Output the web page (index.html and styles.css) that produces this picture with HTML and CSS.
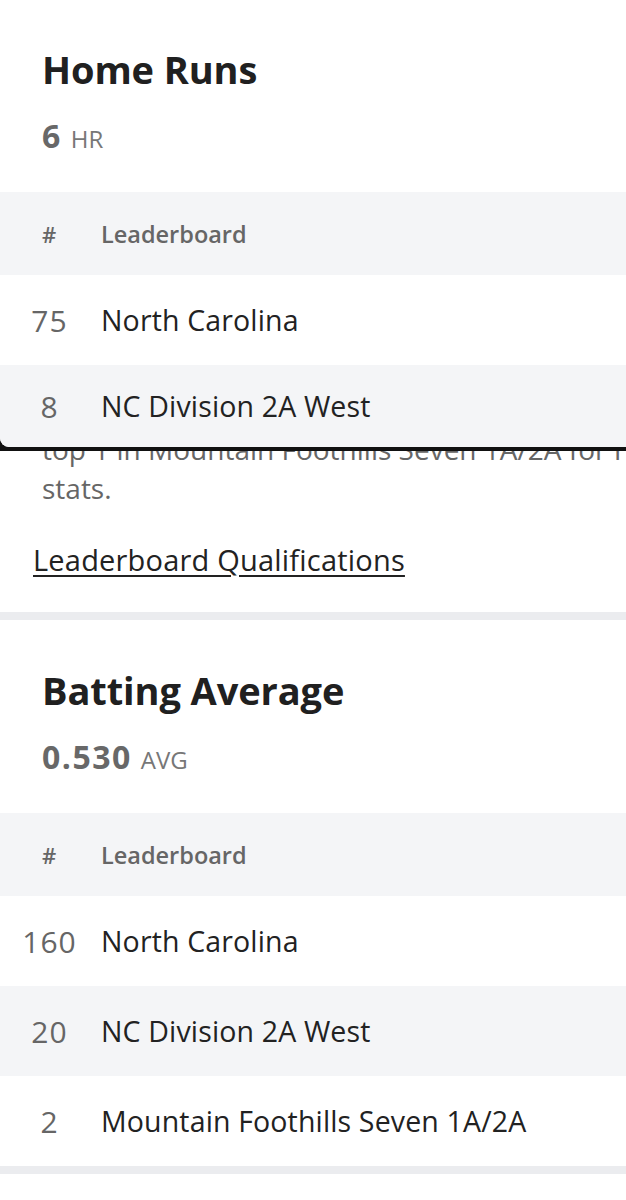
FILE: index.html
```html
<!DOCTYPE html>
<html lang="en">
<head>
<meta charset="utf-8">
<title>Stats</title>
<link rel="stylesheet" href="styles.css">
</head>
<body>
<div class="overlay-wrap">
  <section class="panel">
    <h2 class="stat-title">Home Runs</h2>
    <div class="stat-value"><span class="num">6</span><span class="unit">HR</span></div>
    <div class="board">
      <div class="row head"><span class="rank">#</span><span class="name">Leaderboard</span></div>
      <div class="row"><span class="rank">75</span><span class="name">North Carolina</span></div>
      <div class="row alt short"><span class="rank">8</span><span class="name">NC Division 2A West</span></div>
    </div>
  </section>
</div>
<div class="under">
  <p class="note"><span class="line">top 1 in Mountain Foothills Seven 1A/2A for Home Runs</span><br><span class="line">stats.</span></p>
  <a class="qual" href="#">Leaderboard Qualifications</a>
</div>
<div class="divider"></div>
<section class="card">
  <h2 class="stat-title">Batting Average</h2>
  <div class="stat-value"><span class="num">0.530</span><span class="unit">AVG</span></div>
  <div class="board">
    <div class="row head"><span class="rank">#</span><span class="name">Leaderboard</span></div>
    <div class="row"><span class="rank">160</span><span class="name">North Carolina</span></div>
    <div class="row alt"><span class="rank">20</span><span class="name">NC Division 2A West</span></div>
    <div class="row"><span class="rank">2</span><span class="name">Mountain Foothills Seven 1A/2A</span></div>
  </div>
</section>
<div class="divider"></div>
</body>
</html>
```
FILE: styles.css
```css
html, body {
  margin: 0;
  padding: 0;
  background: #ffffff;
  overflow-x: hidden;
}
body {
  font-family: "Open Sans", "Noto Sans", sans-serif;
  color: #222222;
  width: 626px;
}
.overlay-wrap {
  position: relative;
  z-index: 2;
  background: #111111;
  padding-bottom: 4px;
}
.panel {
  background: #ffffff;
  padding-top: 46px;
  border-bottom-left-radius: 9px;
  overflow: hidden;
}
.card {
  padding-top: 47px;
}
.stat-title {
  margin: 0 0 0 42px;
  font-size: 38px;
  line-height: 46px;
  font-weight: 700;
  color: #202020;
  letter-spacing: -0.1px;
}
.stat-value {
  display: flex;
  align-items: baseline;
  gap: 9px;
  margin: 24px 0 0 42px;
  height: 40px;
  line-height: 40px;
  color: #666666;
}
.stat-value .num {
  font-size: 32px;
  font-weight: 700;
  color: #686868;
  letter-spacing: 1.5px;
}
.stat-value .unit {
  font-size: 24px;
  font-weight: 400;
  color: #777777;
}
.board {
  margin-top: 36px;
}
.row {
  display: grid;
  grid-template-columns: 98px 1fr;
  column-gap: 3px;
  align-items: center;
  height: 90px;
  font-size: 28.5px;
  letter-spacing: 0.15px;
  color: #222222;
}
.row.head {
  height: 83px;
  background: #f4f5f7;
  font-size: 23.5px;
  font-weight: 600;
  letter-spacing: 0;
  color: #666666;
}
.row.alt {
  background: #f4f5f7;
}
.row.short {
  height: 82px;
}
.rank {
  text-align: center;
  color: #666666;
  font-size: 30px;
  letter-spacing: 1px;
  text-indent: 1px;
}
.head .rank {
  font-size: 22px;
  letter-spacing: 0;
  text-indent: 0;
}
.under {
  position: relative;
  z-index: 1;
  margin-top: -21px;
  padding-bottom: 34px;
}
.note {
  margin: 0 0 0 42px;
  font-size: 28px;
  line-height: 39px;
  color: #666666;
}
.note .line {
  white-space: nowrap;
}
.qual {
  display: inline-block;
  margin: 34px 0 0 33px;
  font-size: 29px;
  line-height: 36px;
  font-weight: 500;
  letter-spacing: 0.2px;
  color: #222222;
  text-decoration: underline;
  text-decoration-thickness: 2px;
  text-underline-offset: 4px;
}
.divider {
  height: 8px;
  background: #ebecef;
}
```
